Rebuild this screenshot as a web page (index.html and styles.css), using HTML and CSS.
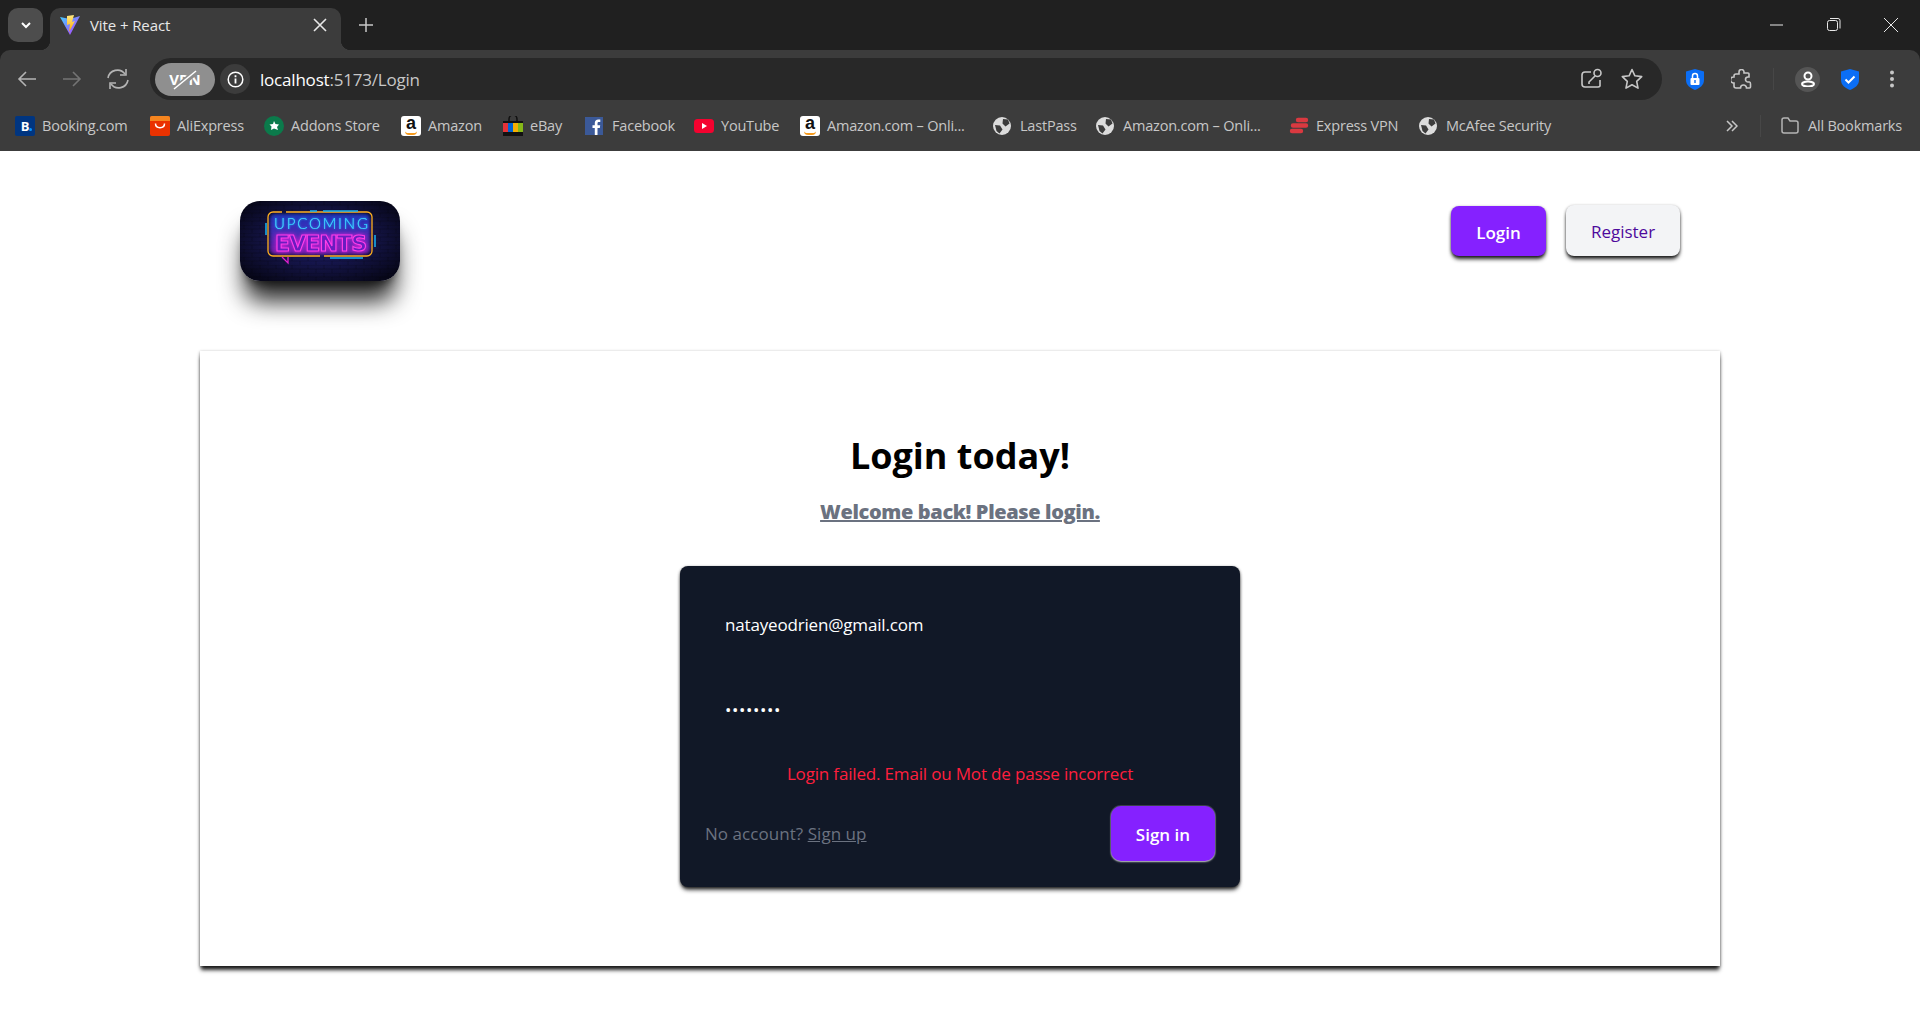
FILE: index.html
```html
<!DOCTYPE html>
<html lang="en">
<head>
    <meta charset="UTF-8">
    <title>Vite + React</title>
    <link rel="stylesheet" href="styles.css">
</head>
<body>
    <div class="browser">
        <div class="tabstrip">
            <div class="tab-search">
                <svg width="12" height="12" viewBox="0 0 12 12"><path d="M2 4l4 4 4-4" fill="none" stroke="#fff" stroke-width="2"/></svg>
            </div>
            <div class="tab">
                <svg class="tab-icon" width="20" height="20" viewBox="0 0 20 20">
                    <defs>
                        <linearGradient id="viteA" x1="0" y1="0" x2="1" y2="1"><stop offset="0" stop-color="#41d1ff"/><stop offset="1" stop-color="#bd34fe"/></linearGradient>
                        <linearGradient id="viteB" x1="0" y1="0" x2="0" y2="1"><stop offset="0" stop-color="#ffea83"/><stop offset="1" stop-color="#ffa800"/></linearGradient>
                    </defs>
                    <path d="M0 2l10 2 10-3-10 19z" fill="url(#viteA)"/>
                    <path d="M7 1l7-1-2 7 3-1-6 11 1-8-3 1z" fill="url(#viteB)"/>
                </svg>
                <span class="tab-title">Vite + React</span>
                <svg class="tab-close" width="14" height="14" viewBox="0 0 14 14"><path d="M1 1l12 12M13 1L1 13" stroke="#e8e8e8" stroke-width="1.6"/></svg>
            </div>
            <svg class="new-tab" width="14" height="14" viewBox="0 0 14 14"><path d="M7 0v14M0 7h14" stroke="#c7c7c7" stroke-width="1.5"/></svg>
            <div class="window-controls">
                <svg width="14" height="14" viewBox="0 0 14 14"><path d="M0 7h13" stroke="#e8e8e8" stroke-width="1"/></svg>
                <svg width="14" height="14" viewBox="0 0 14 14"><rect x=".5" y="2.5" width="10" height="10" rx="2" fill="none" stroke="#e8e8e8"/><path d="M3 .5h8a2 2 0 0 1 2 2v8" fill="none" stroke="#e8e8e8"/></svg>
                <svg width="14" height="14" viewBox="0 0 14 14"><path d="M0 0l14 14M14 0L0 14" stroke="#e8e8e8" stroke-width="1"/></svg>
            </div>
        </div>

        <div class="toolbar">
            <div class="nav-buttons">
                <svg width="20" height="20" viewBox="0 0 20 20"><path d="M19 10H2M9 3l-7 7 7 7" fill="none" stroke="#b4b4b4" stroke-width="1.6"/></svg>
                <svg width="20" height="20" viewBox="0 0 20 20"><path d="M1 10h17M11 3l7 7-7 7" fill="none" stroke="#747474" stroke-width="1.6"/></svg>
                <svg class="reload" width="24" height="22" viewBox="0 0 24 22"><path d="M2 10a9.500 9.500 0 0 1 17-4M22 12a9.500 9.500 0 0 1-17 4" fill="none" stroke="#b4b4b4" stroke-width="1.6"/><path d="M14 7h6V1M10 15H4v6" fill="none" stroke="#b4b4b4" stroke-width="1.600"/></svg>
            </div>
            <div class="omnibox">
                <div class="vpn-pill">
                    <span>VPN</span>
                    <svg class="vpn-slash" width="28" height="20" viewBox="0 0 28 20"><path d="M3 20L26 1" stroke="#8f8f8f" stroke-width="6"/><path d="M3 19L25 1" stroke="#fff" stroke-width="1.500"/></svg>
                </div>
                <div class="site-info">
                    <svg width="17" height="17" viewBox="0 0 17 17"><circle cx="8.500" cy="8.500" r="7.300" fill="none" stroke="#fff" stroke-width="1.500"/><path d="M8.500 7.500v5M8.500 4.200v2" stroke="#fff" stroke-width="1.800"/></svg>
                </div>
                <div class="url"><span class="host">localhost</span>:5173/Login</div>
                <div class="omni-icons">
                    <svg width="22" height="22" viewBox="0 0 22 22"><path d="M10 4H4a3 3 0 0 0-3 3v9a3 3 0 0 0 3 3h13a3 3 0 0 0 2-1v-6" fill="none" stroke="#c7c7c7" stroke-width="1.600"/><circle cx="16.500" cy="5" r="3.500" fill="none" stroke="#c7c7c7" stroke-width="1.600"/><path d="M14 8l-6 6v2" fill="none" stroke="#c7c7c7" stroke-width="1.600"/></svg>
                    <svg width="22" height="22" viewBox="0 0 22 22"><path d="M11 1.500l2.900 6.300 6.800.8-5 4.700 1.300 6.800L11 16.700l-6 3.400 1.300-6.800-5-4.700 6.800-.8z" fill="none" stroke="#c7c7c7" stroke-width="1.600" stroke-linejoin="round"/></svg>
                </div>
            </div>
            <div class="ext-icons">
                <svg width="18" height="21" viewBox="0 0 18 21"><path d="M9 0l9 2.500V11c0 5-4 8-9 10-5-2-9-5-9-10V2.500z" fill="#0b6ef5"/><rect x="4.500" y="9" width="9" height="7" rx="1" fill="#fff"/><path d="M6.500 9V7a2.500 2.500 0 0 1 5 0v2" fill="none" stroke="#fff" stroke-width="1.500"/><rect x="8.300" y="11" width="1.400" height="3" fill="#0b6ef5"/></svg>
                <svg class="ext-puzzle" width="21" height="21" viewBox="0 0 21 21"><path d="M8 3a2.500 2.500 0 0 1 5 0v1h4a1 1 0 0 1 1 1v3h-1a2.500 2.500 0 0 0 0 5h1.500c1 0 1 1 1 2v3a1 1 0 0 1-1 1h-3a3 3 0 0 0-6 0H5a2 2 0 0 1-2-2v-3H2.500a3 3 0 0 1 0-6H3V7a2 2 0 0 1 2-2h3z" fill="none" stroke="#c7c7c7" stroke-width="1.600"/></svg>
                <span class="ext-divider"></span>
                <div class="profile">
                    <svg width="16" height="16" viewBox="0 0 16 16"><circle cx="8" cy="5" r="3.500" fill="none" stroke="#fff" stroke-width="2"/><ellipse cx="8" cy="13" rx="6" ry="2.500" fill="none" stroke="#fff" stroke-width="2"/></svg>
                </div>
                <svg width="18" height="21" viewBox="0 0 18 21"><path d="M9 0l9 2.500V11c0 5-4 8-9 10-5-2-9-5-9-10V2.500z" fill="#0b6ef5"/><path d="M4.500 10.500l3 3 6-6" fill="none" stroke="#fff" stroke-width="2"/></svg>
                <svg class="ext-menu" width="6" height="18" viewBox="0 0 6 18"><circle cx="3" cy="2.500" r="2" fill="#c7c7c7"/><circle cx="3" cy="9" r="2" fill="#c7c7c7"/><circle cx="3" cy="15.500" r="2" fill="#c7c7c7"/></svg>
            </div>
        </div>

        <div class="bookmarks">
            <div class="bookmark booking"><span class="bm-box bm-booking">B<i></i></span><span>Booking.com</span></div>
            <div class="bookmark ali">
                <svg width="20" height="20" viewBox="0 0 20 20"><rect width="20" height="20" rx="2" fill="#ea3200"/><path d="M0 5V2a2 2 0 0 1 2-2h16a2 2 0 0 1 2 2v3z" fill="#f5851f"/><path d="M5.500 7.500c0 5.500 9 5.500 9 0" fill="none" stroke="#fff" stroke-width="1.500"/></svg>
                <span>AliExpress</span>
            </div>
            <div class="bookmark addons">
                <svg width="20" height="20" viewBox="0 0 20 20"><circle cx="10" cy="10" r="10" fill="#0b7a4b"/><path d="M10 5l1.500 3 3.500.5-2 2.500 1 3-4-1.500-3 1.500.5-3.500L5.500 8.500 9 8z" fill="#fff"/></svg>
                <span>Addons Store</span>
            </div>
            <div class="bookmark amazon"><span class="bm-box bm-amazon">a<i></i></span><span>Amazon</span></div>
            <div class="bookmark ebay">
                <svg width="20" height="20" viewBox="0 0 20 20"><path d="M6 5V3a4 4 0 0 1 8 0v2" fill="none" stroke="#111" stroke-width="1.500"/><rect y="5" width="20" height="15" fill="#111"/><rect y="7" width="5" height="9" fill="#e53238"/><rect x="5" y="7" width="5" height="9" fill="#0064d2"/><rect x="10" y="7" width="5" height="9" fill="#f5af02"/><rect x="15" y="7" width="5" height="9" fill="#86b817"/></svg>
                <span>eBay</span>
            </div>
            <div class="bookmark facebook">
                <svg width="18" height="18" viewBox="0 0 18 18"><rect width="18" height="18" fill="#3b5998"/><path d="M12.500 18v-7h2.300l.4-2.800h-2.700V6.500c0-.8.300-1.400 1.400-1.400h1.400V2.600c-.3 0-1.100-.1-2-.1-2.100 0-3.500 1.200-3.500 3.600v2.100H7.500V11h2.300v7z" fill="#fff"/></svg>
                <span>Facebook</span>
            </div>
            <div class="bookmark youtube">
                <svg width="20" height="14" viewBox="0 0 20 14"><rect width="20" height="14" rx="3.500" fill="#f4022f"/><path d="M8 4l5 3-5 3z" fill="#fff"/></svg>
                <span>YouTube</span>
            </div>
            <div class="bookmark amazon2"><span class="bm-box bm-amazon">a<i></i></span><span>Amazon.com – Onli...</span></div>
            <div class="bookmark lastpass">
                <svg class="globe" width="18" height="18" viewBox="0 0 18 18"><circle cx="9" cy="9" r="9" fill="#dcdcdc"/><path d="M10 2l5 .5 1.500 4-4 3-3-3zM2 8l5 .5 2.500 4-3 4-3-2.500z" fill="#3c3c3c"/></svg>
                <span>LastPass</span>
            </div>
            <div class="bookmark amazon3">
                <svg class="globe" width="18" height="18" viewBox="0 0 18 18"><circle cx="9" cy="9" r="9" fill="#dcdcdc"/><path d="M10 2l5 .5 1.500 4-4 3-3-3zM2 8l5 .5 2.500 4-3 4-3-2.500z" fill="#3c3c3c"/></svg>
                <span>Amazon.com – Onli...</span>
            </div>
            <div class="bookmark express">
                <svg width="20" height="17" viewBox="0 0 20 17"><path d="M9 3h8M4 8.500h13M3 14h9" fill="none" stroke="#da3940" stroke-width="4.400" stroke-linecap="round"/></svg>
                <span>Express VPN</span>
            </div>
            <div class="bookmark mcafee">
                <svg class="globe" width="18" height="18" viewBox="0 0 18 18"><circle cx="9" cy="9" r="9" fill="#dcdcdc"/><path d="M10 2l5 .5 1.500 4-4 3-3-3zM2 8l5 .5 2.500 4-3 4-3-2.500z" fill="#3c3c3c"/></svg>
                <span>McAfee Security</span>
            </div>
            <div class="bookmarks-end">
                <svg width="12" height="12" viewBox="0 0 12 12"><path d="M1 1l5 5-5 5M6 1l5 5-5 5" fill="none" stroke="#c7c7c7" stroke-width="1.500"/></svg>
                <span class="bm-divider"></span>
                <div class="all-bookmarks">
                    <svg width="18" height="17" viewBox="0 0 18 17"><path d="M1 3a2 2 0 0 1 2-2h4l2 3h6a2 2 0 0 1 2 2v8a2 2 0 0 1-2 2H3a2 2 0 0 1-2-2z" fill="none" stroke="#b4b4b4" stroke-width="1.500"/></svg>
                    All Bookmarks
                </div>
            </div>
        </div>
    </div>

    <div class="page">
        <header class="navbar">
            <div class="logo">
                <svg width="160" height="80" viewBox="0 0 160 80">
                    <defs>
                        <radialGradient id="wall" cx="50%" cy="48%" r="62%"><stop offset="0" stop-color="#20207a"/><stop offset=".6" stop-color="#12123f"/><stop offset="1" stop-color="#07071a"/></radialGradient>
                        <linearGradient id="inner" x1="0" y1="0" x2="0" y2="1"><stop offset="0" stop-color="#1f3fd8"/><stop offset="1" stop-color="#8a1fc0"/></linearGradient>
                        <pattern id="bricks" width="16" height="8" patternUnits="userSpaceOnUse"><path d="M0 0h16M0 4h16M4 0v4M12 4v4" stroke="#000" stroke-opacity=".35" stroke-width=".6" fill="none"/></pattern>
                        <filter id="glow" x="-20%" y="-20%" width="140%" height="140%"><feGaussianBlur stdDeviation="1.800"/></filter>
                    </defs>
                    <rect width="160" height="80" fill="url(#wall)"/>
                    <rect width="160" height="80" fill="url(#bricks)"/>
                    <rect x="30" y="13" width="100" height="40" rx="5" fill="url(#inner)" opacity=".8" filter="url(#glow)"/>
                    <path d="M42 11H33a5 5 0 0 0-5 5v34a5 5 0 0 0 5 5h47M84 55h43a5 5 0 0 0 5-5V16a5 5 0 0 0-5-5H46" fill="none" stroke="#ffb020" stroke-width="1.300"/>
                    <text class="logo-upcoming" x="81" y="28" textLength="94" text-anchor="middle">UPCOMING</text>
                    <text class="logo-events" x="81" y="50" textLength="92" text-anchor="middle">EVENTS</text>
                    <path d="M70 10h7M83 10h35M26 22v12M135 34v12M90 57h33" stroke="#19b4f5" stroke-width="1.500" fill="none"/>
                    <path d="M42 56l6 6v-6" stroke="#e01fd0" stroke-width="1.300" fill="none"/>
                </svg>
            </div>
            <nav class="nav-actions">
                <a class="btn btn-primary">Login</a>
                <a class="btn btn-light">Register</a>
            </nav>
        </header>

        <main class="login-panel">
            <h1>Login today!</h1>
            <p class="subtitle">Welcome back! Please login.</p>
            <form class="login-form">
                <div class="field">natayeodrien@gmail.com</div>
                <div class="field field-password">••••••••</div>
                <p class="form-error">Login failed. Email ou Mot de passe incorrect</p>
                <div class="form-footer">
                    <p class="no-account">No account? <a>Sign up</a></p>
                    <button type="button" class="btn btn-signin">Sign in</button>
                </div>
            </form>
        </main>
    </div>
</body>
</html>
```

FILE: styles.css
```css
* {
    box-sizing: border-box;
}
body {
    margin: 0;
    height: 1020px;
    overflow: hidden;
    background-color: #fff;
    font-family: "Open Sans", "Noto Sans", sans-serif;
}
svg {
    display: block;
    flex: none;
}

/* browser chrome */
.browser {
    height: 151px;
    background-color: #202020;
    color: #c7c7c7;
}
.tabstrip {
    height: 50px;
    display: flex;
    align-items: center;
    padding: 8px 0 0 8px;
}
.tab-search {
    width: 35px;
    height: 34px;
    margin-top: -8px;
    border-radius: 10px;
    background-color: #4d4d4d;
    display: flex;
    align-items: center;
    justify-content: center;
}
.tab {
    position: relative;
    width: 291px;
    height: 42px;
    margin-left: 7px;
    padding: 0 14px 8px 10px;
    border-radius: 10px 10px 0 0;
    background-color: #3c3c3c;
    display: flex;
    align-items: center;
    font-size: 15px;
    letter-spacing: -0.1px;
    color: #e8e8e8;
}
.tab::before,
.tab::after {
    content: "";
    position: absolute;
    bottom: 0;
    width: 10px;
    height: 10px;
}
.tab::before {
    left: -10px;
    background: radial-gradient(circle at 0 0, transparent 10px, #3c3c3c 10.5px);
}
.tab::after {
    right: -10px;
    background: radial-gradient(circle at 100% 0, transparent 10px, #3c3c3c 10.5px);
}
.tab-title {
    margin-left: 10px;
    flex: 1;
}
.new-tab {
    margin: -8px 0 0 18px;
}
.window-controls {
    margin: -8px 22px 0 auto;
    display: flex;
    gap: 43px;
}
.toolbar {
    height: 58px;
    padding: 8px 0 8px 17px;
    background-color: #3c3c3c;
    border-radius: 10px 10px 0 0;
    display: flex;
    align-items: center;
}
.nav-buttons {
    width: 133px;
    display: flex;
    align-items: center;
    gap: 25px;
}
.reload {
    margin-left: -1px;
}
.omnibox {
    width: 1512px;
    height: 42px;
    padding: 0 19px 0 5px;
    border-radius: 21px;
    background-color: #282828;
    display: flex;
    align-items: center;
    font-size: 17px;
}
.vpn-pill {
    position: relative;
    width: 60px;
    height: 33px;
    border-radius: 17px;
    background-color: #8f8f8f;
    color: #fff;
    font-size: 15px;
    font-weight: 700;
    display: flex;
    align-items: center;
    justify-content: center;
}
.vpn-slash {
    position: absolute;
    left: 16px;
    top: 7px;
}
.site-info {
    width: 30px;
    height: 30px;
    margin-left: 5px;
    border-radius: 50%;
    background-color: #3c3c3c;
    display: flex;
    align-items: center;
    justify-content: center;
}
.url {
    margin-left: 10px;
    flex: 1;
    letter-spacing: -0.2px;
    color: #c7c7c7;
}
.host {
    color: #fff;
}
.omni-icons {
    display: flex;
    align-items: center;
    gap: 18px;
}
.ext-icons {
    margin-left: 24px;
    display: flex;
    align-items: center;
}
.ext-puzzle {
    margin-left: 27px;
}
.ext-divider {
    width: 1px;
    height: 22px;
    margin: 0 21px;
    background-color: #474747;
}
.profile {
    width: 25px;
    height: 25px;
    margin-right: 21px;
    border-radius: 50%;
    background-color: #555;
    display: flex;
    align-items: center;
    justify-content: center;
}
.ext-menu {
    margin-left: 30px;
}
.bookmarks {
    height: 43px;
    padding: 0 18px 8px 15px;
    background-color: #3c3c3c;
    display: flex;
    align-items: center;
    font-size: 14.5px;
    letter-spacing: -0.2px;
}
.bookmark {
    display: grid;
    grid-template-columns: 27px auto;
    align-items: center;
    white-space: nowrap;
}
.booking { width: 135px; }
.ali { width: 114px; }
.addons { width: 137px; }
.amazon { width: 102px; }
.ebay { width: 82px; }
.facebook { width: 109px; }
.youtube { width: 106px; }
.amazon2 { width: 193px; }
.lastpass { width: 103px; }
.amazon3 { width: 193px; }
.express { width: 130px; }
.bm-box {
    position: relative;
    width: 20px;
    height: 20px;
    border-radius: 2px;
    display: flex;
    align-items: center;
    justify-content: center;
    font-weight: 700;
}
.bm-booking {
    background-color: #003580;
    color: #fff;
    font-size: 13px;
}
.bm-booking i {
    position: absolute;
    right: 3px;
    bottom: 5px;
    width: 3px;
    height: 3px;
    border-radius: 50%;
    background-color: #0896ff;
}
.bm-amazon {
    background-color: #fff;
    border-radius: 3px;
    color: #111;
    font-family: "Liberation Sans", sans-serif;
    font-size: 18px;
    padding-bottom: 4px;
}
.bm-amazon i {
    position: absolute;
    left: 4px;
    bottom: 1px;
    width: 12px;
    height: 4px;
    border-bottom: 2px solid #f59a1d;
    border-radius: 0 0 8px 8px;
}
.bookmarks-end {
    margin-left: auto;
    display: flex;
    align-items: center;
}
.bm-divider {
    width: 1px;
    height: 22px;
    margin: 0 20px 0 22px;
    background-color: #474747;
}
.all-bookmarks {
    display: flex;
    align-items: center;
    gap: 9px;
}

/* page */
.page {
    height: 869px;
    padding-top: 50px;
}
.navbar {
    width: 1440px;
    height: 150px;
    margin: 0 auto;
    display: flex;
    align-items: flex-start;
    justify-content: space-between;
}
.logo {
    width: 160px;
    height: 80px;
    border-radius: 20px;
    box-shadow: 0 25px 25px -5px rgba(0, 0, 0, 0.85), 0 8px 10px -6px rgba(0, 0, 0, 0.6);
}
.logo svg {
    border-radius: 20px;
}
.nav-actions {
    display: flex;
    align-items: flex-end;
    gap: 20px;
    margin-top: 4px;
}
.btn {
    height: 51px;
    padding-top: 2px;
    border-radius: 8px;
    display: flex;
    align-items: center;
    justify-content: center;
    font-family: inherit;
    font-size: 17px;
    font-weight: 600;
    border: none;
    box-shadow: 0 4px 4px -1px rgba(0, 0, 0, 0.85), 0 1px 3px rgba(0, 0, 0, 0.5);
}
.btn-primary {
    width: 95px;
    height: 50px;
    background-color: #8521ff;
    color: #fff;
}
.btn-light {
    width: 114px;
    background-color: #f3f4f6;
    color: #4e0a9c;
    font-weight: 500;
}
.login-panel {
    width: 1520px;
    height: 615px;
    margin: 0 auto;
    padding-top: 85px;
    background-color: #fff;
    box-shadow: 0 5px 4px -1px rgba(0, 0, 0, 0.85), 0 1px 3px rgba(0, 0, 0, 0.45);
    display: flex;
    flex-direction: column;
    align-items: center;
}
.login-panel h1 {
    margin: 0;
    font-size: 36px;
    line-height: 40px;
    font-weight: 700;
    color: #000;
}
.subtitle {
    margin: 22px 0 0;
    font-size: 20px;
    line-height: 28px;
    font-weight: 800;
    letter-spacing: -0.37px;
    color: #6b7280;
    text-decoration: underline;
}
.login-form {
    width: 560px;
    height: 321px;
    margin-top: 40px;
    padding: 32px 24px 24px;
    border-radius: 8px;
    background-color: #111827;
    box-shadow: 0 4px 4px -1px rgba(0, 0, 0, 0.7), 0 1px 3px rgba(0, 0, 0, 0.6);
    font-size: 17px;
    letter-spacing: -0.17px;
}
.field {
    height: 52px;
    padding-left: 21px;
    display: flex;
    align-items: center;
    color: #fff;
}
.field-password {
    margin-top: 33px;
    letter-spacing: 0.6px;
}
.form-error {
    margin: 25px 0 0;
    line-height: 28px;
    text-align: center;
    color: #ff1f3d;
}
.form-footer {
    margin-top: 18px;
    display: flex;
    align-items: center;
    justify-content: space-between;
}
.no-account {
    margin: 0 0 0 1px;
    letter-spacing: 0.05px;
    color: #6b7280;
}
.no-account a {
    text-decoration: underline;
}
.btn-signin {
    width: 104px;
    height: 55px;
    margin-right: 1px;
    background-color: #8521ff;
    color: #fff;
    border-radius: 10px;
    box-shadow: 0 1px 2px rgba(255, 255, 255, 0.7), 0 0 0 1px rgba(255, 255, 255, 0.15);
}

/* logo lettering */
.logo-upcoming {
    font-family: "Lato", sans-serif;
    font-size: 15px;
    font-weight: 300;
    fill: #5ce4ff;
    stroke: #20c8ff;
    stroke-width: 0.2;
    filter: drop-shadow(0 0 1px #1aa0ff);
}
.logo-events {
    font-family: "DejaVu Sans", sans-serif;
    font-size: 22px;
    font-weight: 700;
    fill: #6a1cc0;
    stroke: #ff3fe8;
    stroke-width: 1.1;
    filter: drop-shadow(0 0 2px #e020e0);
}
```
